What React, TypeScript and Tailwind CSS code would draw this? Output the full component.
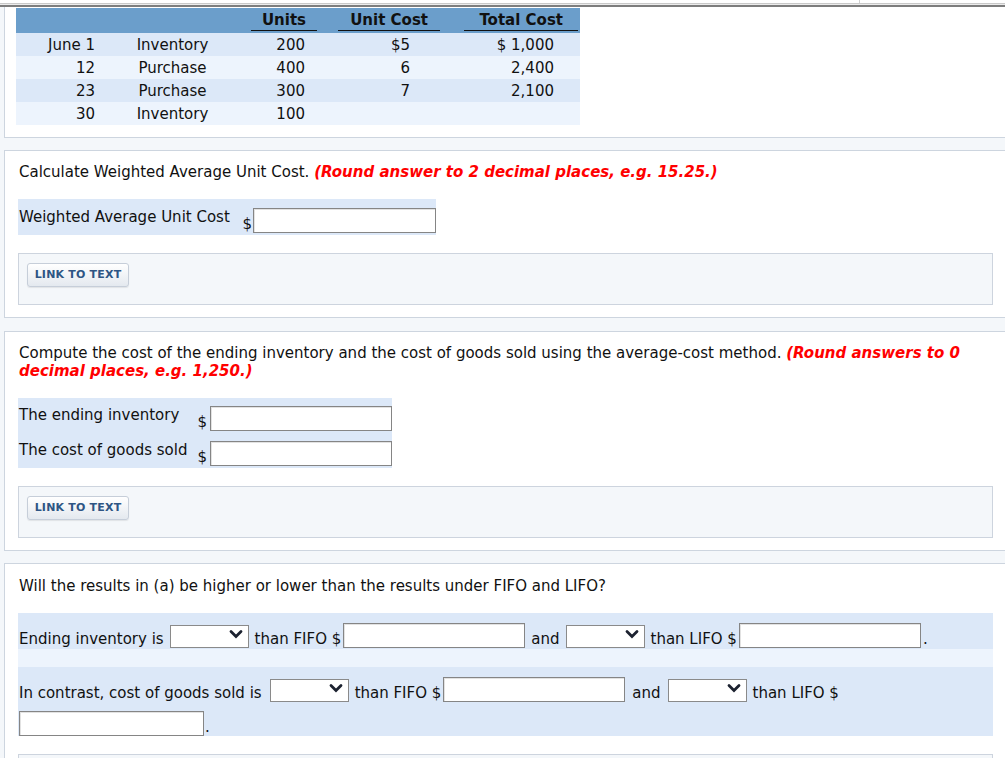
import React from 'react'

const rows = [
  { date: 'June 1', desc: 'Inventory', units: '200', cost: '$5', total: '$ 1,000' },
  { date: '12', desc: 'Purchase', units: '400', cost: '6', total: '2,400' },
  { date: '23', desc: 'Purchase', units: '300', cost: '7', total: '2,100' },
  { date: '30', desc: 'Inventory', units: '100', cost: '', total: '' },
]

function Field({ className = 'w-[183px]' }: { className?: string }) {
  return <input type="text" className={`h-[25px] border border-[#858585] bg-white shadow-[inset_1px_1px_0_#e2e2e2] outline-none ${className}`} />
}

function Pick() {
  return (
    <div className="relative h-[23px] w-[79px] shrink-0 border border-[#8a8a8a] bg-white">
      <svg className="absolute right-[5px] top-[3px]" width="14" height="10" viewBox="0 0 14 10">
        <path d="M2 2.5 L7 7.5 L12 2.5" stroke="#1c2230" strokeWidth="2.8" fill="none" strokeLinecap="round" />
      </svg>
    </div>
  )
}

function LinkBox() {
  return (
    <div className="mt-[18px] h-[52px] border border-[#cdd4de] bg-[#f4f7fa] pl-[8px] pt-[9px]">
      <button className="h-[24px] w-[102px] rounded-[3px] border border-[#c6ced9] bg-gradient-to-b from-white to-[#e4e9ef] text-[11px] leading-[14px] font-bold tracking-[0.2px] text-[#2e5584] shadow-[0_1px_1px_rgba(0,0,0,0.08)]">
        LINK TO TEXT
      </button>
    </div>
  )
}

function Red({ children }: { children: React.ReactNode }) {
  return <span className="font-bold italic text-[#ff0000]">{children}</span>
}

export default function App() {
  return (
    <div className="min-h-[758px] overflow-hidden bg-[#f4f7fa] font-['DejaVu_Sans',Verdana,sans-serif] text-[15px] leading-[18px] text-[#111]">
      {/* top rule */}
      <div className="flex h-[3px] bg-white">
        <div className="w-[860px] border-r border-[#d0d0d0]" />
      </div>
      <div className="h-[1px] bg-[#c9c9c9]" />
      <div className="h-[1px] bg-[#ececec]" />
      <div className="h-[2px] bg-[#7d7d7d]" />

      {/* table panel */}
      <div className="ml-[4px] border-b border-l border-[#cdd5df] bg-white pb-[12px] pl-[11px] pt-[1px]">
        <div className="w-[564px]">
          <div className="grid h-[25px] grid-cols-[94px_125px_95px_120px_130px] bg-[#6b9ecb] pt-[3px] font-bold">
            <div />
            <div />
            <div className="flex justify-end pr-[13px]">
              <span className="h-[20px] border-b-[1.5px] border-[#111] px-[11px]">Units</span>
            </div>
            <div className="flex justify-end pr-[10px]">
              <span className="h-[20px] border-b-[1.5px] border-[#111] px-[12px]">Unit Cost</span>
            </div>
            <div className="flex justify-end pr-[2px]">
              <span className="h-[20px] border-b-[1.5px] border-[#111] px-[15px]">Total Cost</span>
            </div>
          </div>
          {rows.map((r, i) => (
            <div
              key={i}
              className={`grid h-[23px] grid-cols-[94px_125px_95px_120px_130px] items-center ${i % 2 === 0 ? 'bg-[#dce8f8]' : 'bg-[#edf4fd]'}`}
            >
              <div className="pr-[15px] text-right">{r.date}</div>
              <div className="text-center">{r.desc}</div>
              <div className="pr-[25px] text-right">{r.units}</div>
              <div className="pr-[40px] text-right">{r.cost}</div>
              <div className="pr-[26px] text-right">{r.total}</div>
            </div>
          ))}
        </div>
      </div>

      {/* weighted average */}
      <div className="ml-[4px] mt-[12px] border-y border-l border-[#cdd5df] bg-white pb-[12px] pl-[13px] pr-[12px] pt-[12px]">
        <p className="pl-[1px]">
          Calculate Weighted Average Unit Cost. <Red>(Round answer to 2 decimal places, e.g. 15.25.)</Red>
        </p>
        <div className="mt-[18px] flex h-[36px] w-[418px] justify-between bg-[#dce8f8]">
          <span className="pl-[1px] pt-[9px]">Weighted Average Unit Cost</span>
          <div className="mb-[2px] flex items-end self-end">
            <span className="mr-[1px]">$</span>
            <Field />
          </div>
        </div>
        <LinkBox />
      </div>

      {/* ending inventory / cogs */}
      <div className="ml-[4px] mt-[13px] border-y border-l border-[#cdd5df] bg-white pb-[12px] pl-[13px] pr-[12px] pt-[12px]">
        <p className="pl-[1px]">
          Compute the cost of the ending inventory and the cost of goods sold using the average-cost method.{' '}
          <Red>(Round answers to 0 decimal places, e.g. 1,250.)</Red>
        </p>
        <div className="mt-[18px] w-[374px] bg-[#dce8f8]">
          <div className="flex h-[35px] justify-between">
            <span className="pl-[1px] pt-[8px]">The ending inventory</span>
            <div className="mb-[2px] flex items-end self-end">
              <span className="mr-[3px]">$</span>
              <Field className="w-[182px]" />
            </div>
          </div>
          <div className="flex h-[35px] justify-between">
            <span className="pl-[1px] pt-[8px]">The cost of goods sold</span>
            <div className="mb-[2px] flex items-end self-end">
              <span className="mr-[3px]">$</span>
              <Field className="w-[182px]" />
            </div>
          </div>
        </div>
        <LinkBox />
      </div>

      {/* FIFO / LIFO comparison */}
      <div className="ml-[4px] mt-[12px] border-y border-l border-[#cdd5df] bg-white pb-[12px] pl-[13px] pr-[12px] pt-[13px]">
        <p className="pl-[1px]">Will the results in (a) be higher or lower than the results under FIFO and LIFO?</p>
        <div className="mt-[18px] flex h-[36px] items-end bg-[#dce8f8] pb-[1px]">
          <span className="pl-[1px]">Ending inventory is</span>
          <div className="ml-[6px]"><Pick /></div>
          <span className="ml-[6px]">than FIFO $</span>
          <Field className="ml-[2px] w-[182px]" />
          <span className="ml-[6px]">and</span>
          <div className="ml-[6px]"><Pick /></div>
          <span className="ml-[6px]">than LIFO $</span>
          <Field className="ml-[2px] w-[182px]" />
          <span className="ml-[2px]">.</span>
        </div>
        <div className="h-[18px] bg-[#edf4fd]" />
        <div className="flex h-[69px] flex-wrap content-start items-end gap-y-[9px] bg-[#dce8f8] pt-[10px]">
          <span className="pl-[1px]">In contrast, cost of goods sold is</span>
          <div className="ml-[8px]"><Pick /></div>
          <span className="ml-[6px]">than FIFO $</span>
          <Field className="ml-[2px] w-[182px]" />
          <span className="ml-[7px]">and</span>
          <div className="ml-[7px]"><Pick /></div>
          <span className="ml-[6px]">than LIFO $</span>
          <Field className="ml-[1px] w-[185px]" />
          <span className="ml-[1px]">.</span>
        </div>
        <LinkBox />
      </div>
    </div>
  )
}
